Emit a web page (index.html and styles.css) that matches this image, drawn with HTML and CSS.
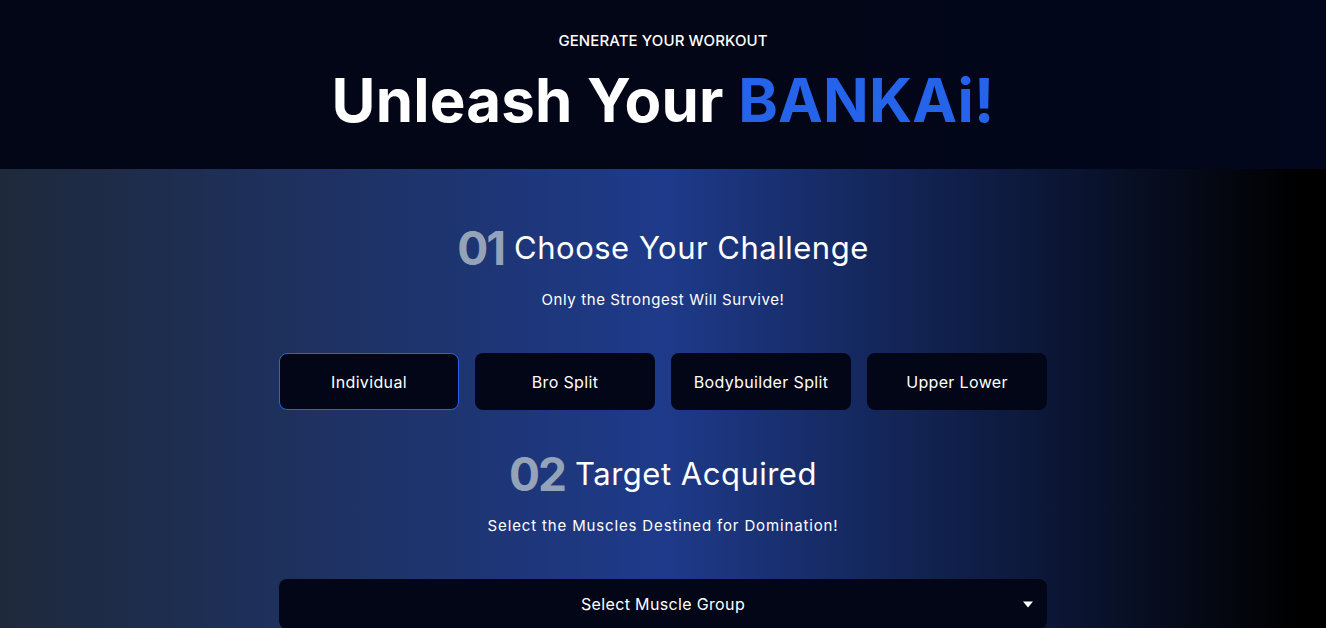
FILE: index.html
```html
<!DOCTYPE html>
<html lang="en">
<head>
<meta charset="utf-8">
<title>Generate Workout</title>
<link rel="stylesheet" href="styles.css">
</head>
<body>
<header class="hero">
  <p class="eyebrow">GENERATE YOUR WORKOUT</p>
  <h1 class="title">Unleash Your <span class="accent">BANKAi!</span></h1>
</header>
<main class="generator">
  <div class="container">
    <section class="step">
      <h2 class="step-head"><span class="step-num">01</span><span class="step-title">Choose Your Challenge</span></h2>
      <p class="step-sub">Only the Strongest Will Survive!</p>
    </section>
    <div class="options">
      <button class="option active">Individual</button>
      <button class="option">Bro Split</button>
      <button class="option">Bodybuilder Split</button>
      <button class="option">Upper Lower</button>
    </div>
    <section class="step step-two">
      <h2 class="step-head"><span class="step-num">02</span><span class="step-title">Target Acquired</span></h2>
      <p class="step-sub step-sub-wide">Select the Muscles Destined for Domination!</p>
    </section>
    <div class="select">
      <span class="select-label">Select Muscle Group</span>
      <svg class="caret" width="10" height="7" viewBox="0 0 10 7"><path d="M0 0.5 H10 L5 6.5 Z" fill="#fff"/></svg>
    </div>
  </div>
</main>
</body>
</html>
```
FILE: styles.css
```css
* { box-sizing: border-box; }
html, body { margin: 0; padding: 0; }
body {
  font-family: "Inter", "Noto Sans", sans-serif;
  color: #fff;
  background: #020617;
  min-height: 628px;
  overflow: hidden;
}
.hero {
  height: 169px;
  background: linear-gradient(90deg, #020617 0%, #020617 60%, #03071d 100%);
  display: flex;
  flex-direction: column;
  align-items: center;
  padding-top: 31px;
}
.eyebrow {
  margin: 0;
  font-size: 15px;
  line-height: 20px;
  font-weight: 500;
  letter-spacing: 0.1px;
}
.title {
  margin: 19px 0 0;
  font-size: 60px;
  line-height: 60px;
  font-weight: 700;
  letter-spacing: 0.2px;
}
.accent { color: #2563eb; }
.generator {
  min-height: 459px;
  background: linear-gradient(90deg, #1e293b 0%, #1e3a8a 50%, #000 98%, #000 100%);
  padding-top: 55px;
}
.container {
  width: 768px;
  margin: 0 auto;
  display: flex;
  flex-direction: column;
}
.step {
  display: flex;
  flex-direction: column;
  align-items: center;
}
.step-head {
  margin: 0;
  display: flex;
  align-items: center;
  gap: 10px;
  height: 48px;
  font-weight: 400;
}
.step-num {
  font-size: 46px;
  line-height: 48px;
  font-weight: 700;
  letter-spacing: -2px;
  color: #94a3b8;
}
.step-title {
  font-size: 31px;
  line-height: 36px;
  font-weight: 400;
  letter-spacing: 0.5px;
}
.step-sub {
  margin: 18px 0 0;
  font-size: 15px;
  line-height: 20px;
  font-weight: 400;
  letter-spacing: 0.6px;
}
.step-sub-wide { letter-spacing: 0.85px; }
.options {
  margin-top: 43px;
  display: grid;
  grid-template-columns: repeat(4, 1fr);
  gap: 16px;
}
.option {
  height: 57px;
  background: #020617;
  color: #fff;
  border: 1px solid transparent;
  border-radius: 8px;
  font-family: inherit;
  font-size: 16px;
  font-weight: 400;
  letter-spacing: 0.35px;
  cursor: pointer;
}
.option.active { border-color: #2563eb; }
.step-two { margin-top: 40px; }
.select {
  margin-top: 43px;
  height: 50px;
  background: #020617;
  border-radius: 8px;
  display: flex;
  align-items: center;
  justify-content: center;
  position: relative;
  font-size: 16px;
  letter-spacing: 0.35px;
}
.caret {
  position: absolute;
  right: 14px;
  top: 22px;
}
```
